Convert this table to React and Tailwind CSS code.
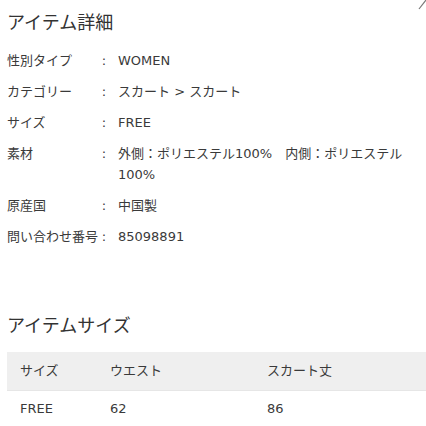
import React from "react";

const specs = [
  { label: "性別タイプ", value: "WOMEN" },
  { label: "カテゴリー", value: "スカート > スカート" },
  { label: "サイズ", value: "FREE" },
  {
    label: "素材",
    value: (
      <>
        <span className="block">外側：ポリエステル100%　内側：ポリエステル</span>
        <span className="block">100%</span>
      </>
    ),
  },
  { label: "原産国", value: "中国製" },
  { label: "問い合わせ番号", value: "85098891" },
];

const sizes = [["FREE", "62", "86"]];

const App = () => {
  return (
    <div
      className="relative w-[426px] h-[426px] overflow-hidden bg-white text-[#3a3a3a]"
      style={{ fontFamily: '"DejaVu Sans", "Noto Sans CJK JP", sans-serif' }}
    >
      {/* corner icon, cut off */}
      <svg
        className="absolute top-0 left-[417px]"
        width="10"
        height="12"
        viewBox="0 0 10 12"
      >
        <line x1="9" y1="0" x2="2" y2="9" stroke="#777" strokeWidth="1.2" />
      </svg>

      <div className="pl-[7px] w-[440px]">
        <h2 className="pt-[10px] text-[18px] leading-[26px] font-normal text-[#333]">
          アイテム詳細
        </h2>

        <dl className="mt-[14px] text-[13px] leading-[21px]">
          {specs.map((s) => (
            <div key={s.label} className="flex mb-[10px]">
              <dt className="w-[90px] shrink-0 whitespace-nowrap">{s.label}</dt>
              <span className="w-[14px] shrink-0 text-center">:</span>
              <dd className="pl-[7px]">{s.value}</dd>
            </div>
          ))}
        </dl>

        <h2 className="mt-[66px] text-[18px] leading-[26px] font-normal text-[#333]">
          アイテムサイズ
        </h2>

        <div className="mt-[13px] text-[13px]">
          <div className="grid grid-cols-[90px_157px_1fr] h-[39px] items-center bg-[#efefef] border-b border-[#e6e6e6]">
            <span className="pl-[13px]">サイズ</span>
            <span className="pl-[13px]">ウエスト</span>
            <span className="pl-[13px]">スカート丈</span>
          </div>
          {sizes.map((r) => (
            <div
              key={r[0]}
              className="grid grid-cols-[90px_157px_1fr] h-[36px] items-center"
            >
              {r.map((c, i) => (
                <span key={i} className="pl-[13px]">
                  {c}
                </span>
              ))}
            </div>
          ))}
        </div>
      </div>
    </div>
  );
};

export default App;
